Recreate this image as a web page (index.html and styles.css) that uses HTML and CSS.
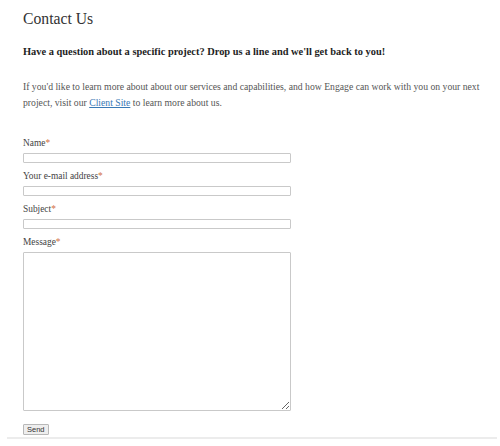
FILE: index.html
```html
<!DOCTYPE html>
<html>
<head>
<meta charset="utf-8">
<title>Contact Us</title>
<link rel="stylesheet" href="styles.css">
</head>
<body>
<div class="page">
  <div class="content">
    <h1 class="title">Contact Us</h1>
    <p class="lead">Have a question about a specific project? Drop us a line and we'll get back to you!</p>
    <p class="intro">If you'd like to learn more about about our services and capabilities, and how Engage can work with you on your next project, visit our <a href="#" class="link">Client Site</a> to learn more about us.</p>
    <form class="form">
      <label class="label">Name<span class="req">*</span></label>
      <input class="field" type="text">
      <label class="label">Your e-mail address<span class="req">*</span></label>
      <input class="field" type="text">
      <label class="label">Subject<span class="req">*</span></label>
      <input class="field" type="text">
      <label class="label">Message<span class="req">*</span></label>
      <textarea class="area"></textarea>
      <div class="actions"><button type="button" class="send">Send</button></div>
    </form>
  </div>
  <div class="rule"></div>
</div>
</body>
</html>
```
FILE: styles.css
```css
html, body {
  margin: 0;
  padding: 0;
  background: #fff;
}
body {
  font-family: "Liberation Serif", "Times New Roman", serif;
  color: #444;
}
.page {
  padding: 9px 3px 0 7px;
}
.content {
  padding-left: 16px;
}
.title {
  margin: 0;
  font-size: 15.7px;
  line-height: 20px;
  font-weight: normal;
  color: #333;
}
.lead {
  margin: 17px 0 0;
  font-size: 10.4px;
  line-height: 12px;
  font-weight: bold;
  color: #1e1e1e;
}
.intro {
  margin: 21px 0 0;
  font-size: 9.7px;
  line-height: 16px;
  color: #555;
  max-width: 470px;
}
.link {
  color: #3a79b5;
  text-decoration: underline;
}
.form {
  display: flex;
  flex-direction: column;
  align-items: flex-start;
  margin-top: 27px;
}
.label {
  display: block;
  font-size: 9.4px;
  line-height: 11px;
  color: #444;
  margin-bottom: 4px;
}
.req {
  color: #d2703f;
}
.field {
  display: block;
  box-sizing: border-box;
  width: 268px;
  height: 10px;
  margin: 0 0 8px;
  padding: 0;
  border: 1px solid #c9c9c9;
  border-radius: 1px;
  background: #fff;
}
.area {
  display: block;
  box-sizing: border-box;
  width: 268px;
  height: 159px;
  margin: 0;
  padding: 0;
  border: 1px solid #c9c9c9;
  border-radius: 1px;
  background: #fff;
  resize: both;
}
.actions {
  margin-top: 13px;
}
.send {
  display: block;
  box-sizing: border-box;
  height: 11px;
  padding: 0 3px;
  font-family: "Liberation Sans", Arial, sans-serif;
  font-size: 7.5px;
  line-height: 9px;
  color: #333;
  background: #eeeeee;
  border: 1px solid #b8b8b8;
  border-radius: 1px;
}
.rule {
  margin-top: 2px;
  height: 2px;
  background: #ececec;
}
```
